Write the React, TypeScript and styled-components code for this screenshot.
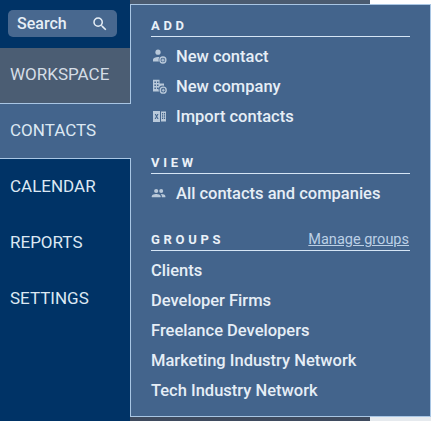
import React from 'react';
import styled, { createGlobalStyle } from 'styled-components';
import { MdSearch } from 'react-icons/md';

const GlobalStyle = createGlobalStyle`
  html, body {
    margin: 0;
    padding: 0;
    background: #fff;
    overflow: hidden;
  }
  * {
    box-sizing: border-box;
  }
`;

const Page = styled.div`
  position: relative;
  display: flex;
  width: 431px;
  height: 421px;
  overflow: hidden;
  font-family: Roboto, 'Liberation Sans', sans-serif;
`;

const Sidebar = styled.nav`
  width: 130px;
  height: 100%;
  flex: none;
  background: #003366;
`;

const SearchArea = styled.div`
  height: 48px;
  padding: 10px 13px 0 8px;
`;

const SearchBox = styled.div`
  display: flex;
  align-items: center;
  justify-content: space-between;
  height: 27px;
  padding: 0 8px 0 9px;
  border-radius: 5px;
  background: #48688f;
  color: #e6eef6;
  font-size: 16px;
  font-weight: 500;
`;

const NavItem = styled.div<{ $state?: 'hover' | 'active' }>`
  display: flex;
  align-items: center;
  height: ${({ $state }) => ($state === 'active' ? 55 : 56)}px;
  padding: 0 0 3px 10px;
  font-size: 17px;
  color: ${({ $state }) => ($state === 'hover' ? '#d5dde6' : '#dce8f3')};
  background: ${({ $state }) =>
    $state === 'hover' ? '#4b5d73' : $state === 'active' ? '#43648c' : 'transparent'};
  border-bottom: ${({ $state }) => ($state ? '1px solid #a9c6e4' : 'none')};

  /* the active item runs into the flyout, covering its left border */
  ${({ $state }) =>
    $state === 'active' &&
    `
    position: relative;
    z-index: 1;
    width: 131px;
  `}
`;

const Main = styled.main`
  flex: 1;
  display: flex;
  background: linear-gradient(#fff 50%, #e6eaee 50%);
`;

const Backdrop = styled.div`
  width: 240px;
  background: linear-gradient(#4b5b70 50%, #3f4b5f 50%);
`;

const Flyout = styled.div`
  position: absolute;
  left: 130px;
  top: 4px;
  width: 301px;
  height: 413px;
  padding: 14px 20px 0 20px;
  background: #43648c;
  border: 1px solid #a9c6e4;
  color: #eaf1f8;
`;

const Section = styled.section<{ $gap?: number }>`
  margin-top: ${({ $gap }) => $gap ?? 0}px;
`;

const SectionHead = styled.div`
  display: flex;
  align-items: flex-end;
  justify-content: space-between;
  height: 18px;
  padding-bottom: 3px;
  margin-bottom: 4px;
  border-bottom: 1px solid #d5e5f5;
`;

const SectionTitle = styled.h3`
  margin: 0;
  font-size: 13px;
  line-height: 14px;
  font-weight: 700;
  letter-spacing: 3.7px;
  color: #eaf1f8;
`;

const ManageLink = styled.a`
  margin-right: 1px;
  font-size: 14.5px;
  line-height: 15px;
  color: #bcd0e6;
  text-decoration: underline;
`;

const MenuRow = styled.div`
  display: flex;
  align-items: center;
  height: 30px;
  font-size: 16.5px;
  font-weight: 500;
  color: #e6eef6;
`;

const IconSlot = styled.span`
  display: inline-flex;
  align-items: center;
  justify-content: center;
  width: 15px;
  margin-right: 10px;
  color: #b9c9da;

  svg {
    overflow: visible;
  }
`;

const PersonAddIcon = () => (
  <svg width="15" height="15" viewBox="-0.5 0 15 15" fill="currentColor">
    <circle cx="6.5" cy="3.2" r="2.6" />
    <path d="M1.5 12.5v-2c0-1.6 2.6-2.6 5-2.6.6 0 1.1 0 1.6.1-.9.9-1.3 2.9-.7 4.5z" />
    <circle cx="11.4" cy="11" r="3" fill="none" stroke="currentColor" strokeWidth="1.3" />
    <path d="M10.8 9.6h1.2v1h1v1.1h-1v1h-1.2v-1h-1v-1.1h1z" />
  </svg>
);

const BusinessAddIcon = () => (
  <svg width="15" height="15" viewBox="-1 0 15 15" fill="currentColor">
    <path d="M1 .8h6.5v3.7H12v2.3a4 4 0 0 0-5 5.7H1zM2.4 2.4v1.6h1.5V2.4zm2.6 0v1.6h1.5V2.4zM2.4 5.4v1.6h1.5V5.4zm2.6 0v1.6h1.5V5.4zM2.4 8.4v1.6h1.5V8.4zm2.6 0v1.6h1.5V8.4z" fillRule="evenodd" />
    <circle cx="11.2" cy="11.2" r="3" fill="none" stroke="currentColor" strokeWidth="1.3" />
    <path d="M10.7 9.8h1v1h1v1h-1v1h-1v-1h-1v-1h1z" />
  </svg>
);

const ExcelIcon = () => (
  <svg width="15" height="15" viewBox="-1 0 15 15" fill="currentColor">
    <path d="M1 2h7v11H1zm1.7 2.9 1.3 2.5-1.4 2.6h1.2l.8-1.7.8 1.7h1.2L5.2 7.4l1.3-2.5H5.3l-.7 1.6-.7-1.6z" fillRule="evenodd" />
    <path d="M9 2.5h5v10H9zm1 1.5v1.4h1.2V4zm2 0v1.4h1.1V4zM10 6.3v1.4h1.2V6.3zm2 0v1.4h1.1V6.3zM10 8.6V10h1.2V8.6zm2 0V10h1.1V8.6z" fillRule="evenodd" />
  </svg>
);

const PeopleIcon = () => (
  <svg width="15" height="15" viewBox="0 0 15 15" fill="currentColor">
    <circle cx="5.2" cy="5" r="2.1" />
    <circle cx="10.2" cy="5" r="2" />
    <path d="M.8 11.2v-1c0-1.5 2.9-2.2 4.4-2.2s4.4.7 4.4 2.2v1z" />
    <path d="M10.6 8c1.6.1 3.8.8 3.8 2.2v1h-3.6v-1.1c0-.8-.4-1.5-1-2z" />
  </svg>
);

const addItems = [
  { label: 'New contact', icon: <PersonAddIcon /> },
  { label: 'New company', icon: <BusinessAddIcon /> },
  { label: 'Import contacts', icon: <ExcelIcon /> },
];

const groups = [
  'Clients',
  'Developer Firms',
  'Freelance Developers',
  'Marketing Industry Network',
  'Tech Industry Network',
];

export default function App() {
  return (
    <Page>
      <GlobalStyle />
      <Sidebar>
        <SearchArea>
          <SearchBox>
            Search
            <MdSearch size={18} />
          </SearchBox>
        </SearchArea>
        <NavItem $state="hover">WORKSPACE</NavItem>
        <NavItem $state="active">CONTACTS</NavItem>
        <NavItem>CALENDAR</NavItem>
        <NavItem>REPORTS</NavItem>
        <NavItem>SETTINGS</NavItem>
      </Sidebar>
      <Main>
        <Backdrop />
      </Main>
      <Flyout>
        <Section>
          <SectionHead>
            <SectionTitle>ADD</SectionTitle>
          </SectionHead>
          {addItems.map((item) => (
            <MenuRow key={item.label}>
              <IconSlot>{item.icon}</IconSlot>
              {item.label}
            </MenuRow>
          ))}
        </Section>
        <Section $gap={25}>
          <SectionHead>
            <SectionTitle>VIEW</SectionTitle>
          </SectionHead>
          <MenuRow>
            <IconSlot>
              <PeopleIcon />
            </IconSlot>
            All contacts and companies
          </MenuRow>
        </Section>
        <Section $gap={25}>
          <SectionHead>
            <SectionTitle>GROUPS</SectionTitle>
            <ManageLink>Manage groups</ManageLink>
          </SectionHead>
          {groups.map((group) => (
            <MenuRow key={group}>{group}</MenuRow>
          ))}
        </Section>
      </Flyout>
    </Page>
  );
}
